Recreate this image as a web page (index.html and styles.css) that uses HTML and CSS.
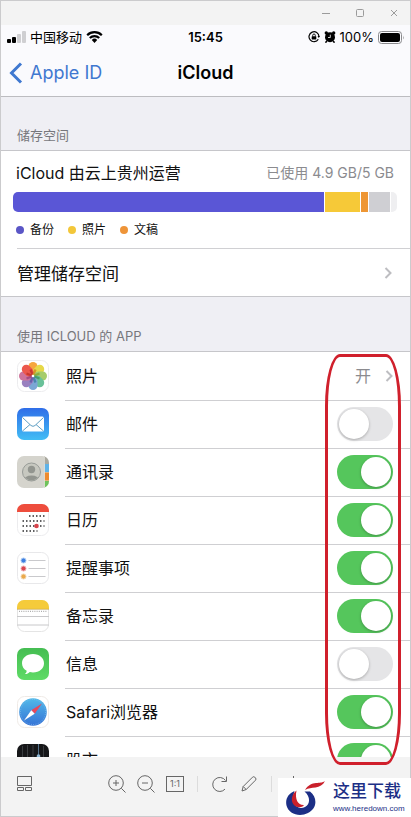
FILE: index.html
```html
<!DOCTYPE html>
<html lang="zh-CN">
<head>
<meta charset="utf-8">
<meta name="viewport" content="width=device-width, initial-scale=1">
<title>iCloud</title>
<link rel="stylesheet" href="styles.css">
</head>
<body>
<div class="window">
  <div class="titlebar">
    <button class="winbtn" aria-label="最小化"><svg width="10" height="10" viewBox="0 0 10 10"><path d="M1 5.5h8"/></svg></button>
    <button class="winbtn" aria-label="最大化"><svg width="10" height="10" viewBox="0 0 10 10"><rect x="1.5" y="1.5" width="7" height="7" rx="1"/></svg></button>
    <button class="winbtn" aria-label="关闭"><svg width="10" height="10" viewBox="0 0 10 10"><path d="M2 2l6 6M8 2l-6 6"/></svg></button>
  </div>

  <header class="phone-head">
    <div class="status">
      <div class="status-left">
        <svg width="19" height="12" viewBox="0 0 19 12"><rect x="0" y="8" width="4" height="4" rx="1"/><rect x="5" y="6" width="4" height="6" rx="1"/><rect x="10" y="3" width="4" height="9" rx="1" fill="#cfcfd2"/><rect x="15" y="0" width="4" height="12" rx="1" fill="#cfcfd2"/></svg>
        <span>中国移动</span>
        <svg width="17" height="12" viewBox="0 0 17 12"><path d="M1.2 4.2a10.4 10.4 0 0 1 14.6 0M3.8 7a6.7 6.7 0 0 1 9.4 0" fill="none" stroke="#000" stroke-width="2.2"/><path d="M5.8 8.9a3.9 3.9 0 0 1 5.4 0L8.5 12z"/></svg>
      </div>
      <time class="clock">15:45</time>
      <div class="status-right">
        <svg width="12" height="12" viewBox="0 0 12 12"><path d="M10.3 8.3A5 5 0 1 1 11 5.5" fill="none" stroke="#000" stroke-width="1.2"/><path d="M9.5 5h2.5l-1.2 2z"/><rect x="3.7" y="5.3" width="4.6" height="3.2" rx=".4"/><path d="M4.7 5.5V4.3a1.3 1.3 0 0 1 2.6 0v1.2" fill="none" stroke="#000" stroke-width=".9"/></svg>
        <svg width="12" height="12" viewBox="0 0 12 12"><circle cx="6" cy="6.3" r="5"/><circle cx="2.3" cy="2" r="1.7"/><circle cx="9.700" cy="2" r="1.7"/><path d="M2.800 10l-1.3 1.7M9.200 10l1.3 1.7" stroke="#000" stroke-width="1.5"/><path d="M6.300 3.700v2.800H4" fill="none" stroke="#fff" stroke-width=".8"/></svg>
        <span>100%</span>
        <svg width="26" height="13" viewBox="0 0 26 13"><rect x=".5" y=".5" width="23" height="12" rx="3" fill="none" stroke="#8a8a8d"/><rect x="2" y="2" width="20" height="9" rx="2"/><path d="M25 4.500q1 2 0 4z" fill="#777"/></svg>
      </div>
    </div>
    <nav class="nav">
      <a class="back" href="#"><svg width="14" height="22" viewBox="0 0 14 22"><path d="M12 1.500L2.500 11L12 20.500"/></svg><span>Apple ID</span></a>
      <h1>iCloud</h1>
    </nav>
  </header>

  <main class="content">
    <h2 class="section">储存空间</h2>
    <section class="card">
      <div class="storage">
        <div class="storage-head"><span>iCloud 由云上贵州运营</span><span class="used">已使用 4.9 GB/5 GB</span></div>
        <div class="bar"><i class="backup"></i><i class="photos"></i><i class="docs"></i><i class="other"></i><i class="free"></i></div>
        <ul class="legend"><li class="l-backup">备份</li><li class="l-photos">照片</li><li class="l-docs">文稿</li></ul>
      </div>
      <a class="manage" href="#"><span>管理储存空间</span><svg class="chev" width="8" height="12" viewBox="0 0 8 12"><path d="M1.500 1l5 5l-5 5"/></svg></a>
    </section>
    <h2 class="section apps-title">使用 ICLOUD 的 APP</h2>
    <div class="apps-area">
      <ul class="apps">
        <li><a class="row" href="#">
          <svg class="icon" viewBox="0 0 32 32"><rect x=".5" y=".5" width="31" height="31" rx="7" fill="#fff" stroke="#ececee"/><g opacity=".88"><rect x="11.500" y="2" width="9" height="13" rx="4.500" fill="#f59a22"/><rect x="11.500" y="2" width="9" height="13" rx="4.500" fill="#e3d32f" transform="rotate(45 16 16)"/><rect x="11.500" y="2" width="9" height="13" rx="4.500" fill="#9ac657" transform="rotate(90 16 16)"/><rect x="11.500" y="2" width="9" height="13" rx="4.500" fill="#55b98b" transform="rotate(135 16 16)"/><rect x="11.500" y="2" width="9" height="13" rx="4.500" fill="#699bd0" transform="rotate(180 16 16)"/><rect x="11.500" y="2" width="9" height="13" rx="4.500" fill="#8b70b8" transform="rotate(225 16 16)"/><rect x="11.500" y="2" width="9" height="13" rx="4.500" fill="#c8608d" transform="rotate(270 16 16)"/><rect x="11.500" y="2" width="9" height="13" rx="4.500" fill="#ea4134" transform="rotate(315 16 16)"/></g><g stroke-width="2.200" opacity=".6"><path d="M16 16l-2.500-6.500M16 16l-6.500-2.500" stroke="#b3261e"/><path d="M16 16l2.500-6.500" stroke="#c96b12"/><path d="M16 16l6.500-2.500" stroke="#7b9a20"/><path d="M16 16l6.500 2.500" stroke="#2f8a4d"/><path d="M16 16l2.500 6.500" stroke="#2c6f93"/><path d="M16 16l-2.500 6.500" stroke="#4c4a9b"/><path d="M16 16l-6.500 2.500" stroke="#8b3377"/></g><circle cx="16" cy="16" r="1.300" fill="#fff"/></svg>
          <span class="name">照片</span><span class="state">开</span><svg class="chev" width="8" height="12" viewBox="0 0 8 12"><path d="M1.500 1l5 5l-5 5"/></svg></a></li>
        <li><label class="row">
          <svg class="icon" viewBox="0 0 32 32"><defs><linearGradient id="mail" x2="0" y2="1"><stop stop-color="#2f6de8"/><stop offset="1" stop-color="#42bdf5"/></linearGradient></defs><rect width="32" height="32" rx="7" fill="url(#mail)"/><rect x="5" y="8.500" width="22" height="15" rx="1.500" fill="#fff"/><path d="M5.500 9.500l8.500 8q2 1.700 4 0l8.500-8M5.500 23l7.500-6.500M26.500 23l-7.500-6.500" fill="none" stroke="#5f9fc4"/></svg>
          <span class="name">邮件</span><input class="switch" type="checkbox" role="switch"></label></li>
        <li><label class="row">
          <svg class="icon" viewBox="0 0 32 32"><defs><clipPath id="cc"><rect width="32" height="32" rx="7"/></clipPath><clipPath id="cp"><circle cx="14.500" cy="16" r="8.500"/></clipPath></defs><g clip-path="url(#cc)"><path fill="#d5d4cd" d="M0 0h32v32H0z"/><path fill="#aaa99f" d="M27 0h5v8h-5z"/><path fill="#60b3e7" d="M27.500 8H32v8h-4.500z"/><path fill="#ee8b2e" d="M27.500 16.500H32v8h-4.500z"/><path fill="#6fc35c" d="M27.500 25H32v7h-4.500z"/><path d="M27.500 0v32" stroke="#e9e8e2" stroke-width=".7"/></g><circle cx="14.500" cy="16" r="9" fill="#c7c8c0" stroke="#989c98"/><g clip-path="url(#cp)" fill="#92958f"><circle cx="14.500" cy="13.500" r="3.700"/><ellipse cx="14.500" cy="24.500" rx="8" ry="5"/></g></svg>
          <span class="name">通讯录</span><input class="switch" type="checkbox" role="switch" checked></label></li>
        <li><label class="row">
          <svg class="icon" viewBox="0 0 32 32"><rect x=".5" y=".5" width="31" height="31" rx="7" fill="#fff" stroke="#ececee"/><path d="M0 8V7a7 7 0 0 1 7-7h18a7 7 0 0 1 7 7v1z" fill="#ee4d3d"/><path d="M12 12h15.500M5.500 17h22M5.500 22h22M5.500 27h15" stroke="#2d2d2f" stroke-width="1.500" stroke-dasharray="1.500 2"/><circle cx="19.500" cy="22" r="2.300" fill="#d8434c"/></svg>
          <span class="name">日历</span><input class="switch" type="checkbox" role="switch" checked></label></li>
        <li><label class="row">
          <svg class="icon" viewBox="0 0 32 32"><rect x=".5" y=".5" width="31" height="31" rx="7" fill="#fff" stroke="#e8e8ea"/><path d="M11.500 8.500h17M11.500 16.500h17M11.500 24.500h17" stroke="#c9c9cc"/><circle cx="6.500" cy="8.500" r="2.500" fill="#3e7fe0" stroke="#a9c9f3"/><circle cx="6.500" cy="16.500" r="2.500" fill="#d94750" stroke="#f1adb0"/><circle cx="6.500" cy="24.500" r="2.500" fill="#eba94b" stroke="#f3d6ab"/></svg>
          <span class="name">提醒事项</span><input class="switch" type="checkbox" role="switch" checked></label></li>
        <li><label class="row">
          <svg class="icon" viewBox="0 0 32 32"><rect x=".5" y=".5" width="31" height="31" rx="7" fill="#fff" stroke="#e4e4e4"/><path d="M0 9V7a7 7 0 0 1 7-7h18a7 7 0 0 1 7 7v2z" fill="#f5cb3b"/><path d="M0 9.300h32" stroke="#c5a64a" stroke-width=".7"/><path d="M2 11.300h28" stroke="#999" stroke-dasharray="1 1.200"/><path d="M0 16.500h32M0 25h32" stroke="#c8c8ca"/></svg>
          <span class="name">备忘录</span><input class="switch" type="checkbox" role="switch" checked></label></li>
        <li><label class="row">
          <svg class="icon" viewBox="0 0 32 32"><defs><linearGradient id="msg" x2="0" y2="1"><stop stop-color="#45bd52"/><stop offset="1" stop-color="#5fdb66"/></linearGradient></defs><rect width="32" height="32" rx="7" fill="url(#msg)"/><path d="M16 6C9.500 6 5 10 5 15.200c0 3.300 1.800 6 4.700 7.600-.1 1.500-.8 2.400-1.700 3.300 2.100-.1 3.600-.8 4.800-2.100 1 .2 2.100.4 3.200.4 6.500 0 11-4 11-9.200S22.500 6 16 6z" fill="#fff"/></svg>
          <span class="name">信息</span><input class="switch" type="checkbox" role="switch"></label></li>
        <li><label class="row">
          <svg class="icon" viewBox="0 0 32 32"><defs><linearGradient id="saf" x2="0" y2="1"><stop stop-color="#51b9e9"/><stop offset="1" stop-color="#3673d6"/></linearGradient></defs><rect x=".5" y=".5" width="31" height="31" rx="7" fill="#fff" stroke="#efeae6"/><circle cx="16" cy="16" r="13.800" fill="url(#saf)"/><circle cx="16" cy="16" r="12.500" fill="none" stroke="#8cc4ee" stroke-width=".8" stroke-dasharray=".8 1.500"/><path d="M25 7.500L14.300 14.200l3.400 3.600z" fill="#e9485a"/><path d="M7 24.500l7.300-10.300 3.400 3.600z" fill="#fff"/></svg>
          <span class="name">Safari浏览器</span><input class="switch" type="checkbox" role="switch" checked></label></li>
        <li><label class="row">
          <svg class="icon" viewBox="0 0 32 32"><rect width="32" height="32" rx="7" fill="#161719"/><path d="M5.500 2v28M10.500 1v30M16 1v30M26.500 2v28" stroke="#3a3d40"/><path d="M21.500 0v32" stroke="#54718a"/><circle cx="21.500" cy="12" r="1.800" fill="#8db6d2"/></svg>
          <span class="name">股市</span><input class="switch" type="checkbox" role="switch" checked></label></li>
      </ul>
      <div class="marker"></div>
    </div>
  </main>

  <footer class="toolbar">
    <button class="tool thumbs" aria-label="缩略图"><svg width="16" height="16" viewBox="0 0 16 16"><path d="M.5.5h14v9H.5zM.5 11.500h6v3h-6zM8.500 11.500h6v3h-6z"/></svg></button>
    <button class="tool" aria-label="放大"><svg width="18" height="18" viewBox="0 0 18 18"><circle cx="8" cy="8" r="7.300"/><path d="M13.300 13.300l4.200 4.200M5 8h6M8 5v6"/></svg></button>
    <button class="tool" aria-label="缩小"><svg width="18" height="18" viewBox="0 0 18 18"><circle cx="8" cy="8" r="7.300"/><path d="M13.300 13.300l4.200 4.200M5 8h6"/></svg></button>
    <button class="tool actual">1:1</button>
    <span class="sep"></span>
    <button class="tool" aria-label="旋转"><svg width="18" height="18" viewBox="0 0 18 18"><path d="M14 14.100A7 7 0 1 1 14.500 5.500M15.500 1.500v5h-5"/></svg></button>
    <button class="tool" aria-label="编辑"><svg width="18" height="18" viewBox="0 0 18 18"><path d="M2 16l1.200-4.500L12.500 2.200q1.200-1 2.300 0l.7.700q1 1.200 0 2.300L6.200 14.500zM3.200 11.500l3 3"/></svg></button>
    <span class="sep"></span>
    <button class="tool" aria-label="保存"><svg width="18" height="18" viewBox="0 0 18 18"><path d="M8.500 1v11M4 8l4.500 4.500L13 8M1 16.500h15"/></svg></button>
    <div class="watermark">
      <svg width="40" height="37" viewBox="0 0 40 37"><path d="M9.500 12C3.500 14.500 0 20 1.500 26.500c2 8.500 13 12 21.500 7.500 9.500-5 9.500-15.500 2-21.500H19.500c6 5 6 12.500.5 15.500C13 31.500 5.500 25.500 9.500 12z" fill="#1c2f86"/><path d="M11.500 11.500C6 16 5.500 23 9.500 26.500c3 2.700 8 2 9.500-.5-5.500.5-9.500-5-7.500-14.500z" fill="#c9202b"/><path d="M20 11c3-5 7-6.500 11-7 4-.4 6 0 9-2-2 4-5.500 6-9.500 6.500-4 .4-7 .5-10.500 2.500z" fill="#c9202b"/></svg>
      <div class="wm-text"><strong>这里下载</strong><span>www.heredown.com</span></div>
    </div>
  </footer>
</div>
</body>
</html>
```
FILE: styles.css
```css
* { box-sizing: border-box; }
body {
  margin: 0;
  font-family: Inter, "Noto Sans CJK SC", sans-serif;
  font-size: 16px;
  color: #111;
}
h1, h2, ul { margin: 0; padding: 0; font-weight: 400; list-style: none; }
a { color: inherit; text-decoration: none; }
button { border: 0; padding: 0; background: none; font: inherit; }
svg { display: block; flex: none; }

.window {
  display: flex;
  flex-direction: column;
  height: 100vh;
  border: 1px solid #cbcbcd;
  background: #fff;
}
.titlebar {
  display: flex;
  justify-content: flex-end;
  align-items: center;
  gap: 24px;
  height: 24px;
  padding-right: 11px;
  background: #f3f3f3;
  flex: none;
}
.winbtn svg { fill: none; stroke: #9b9b9b; }

.phone-head { background: #fafafd; border-bottom: 1px solid #bcbcc0; flex: none; }
.status {
  display: grid;
  grid-template-columns: 1fr auto 1fr;
  align-items: center;
  height: 24px;
  padding: 0 6px;
  font-size: 13px;
  line-height: 20px;
  color: #000;
}
.status-left, .status-right { display: flex; align-items: center; gap: 4px; }
.status-right { justify-content: flex-end; }
.clock { font-weight: 600; }
.nav {
  display: grid;
  grid-template-columns: 1fr auto 1fr;
  align-items: center;
  height: 47px;
  padding: 0 8px;
}
.back { display: flex; align-items: center; gap: 7px; font-size: 18px; color: #3f78d0; }
.back path { fill: none; stroke: #3f78d0; stroke-width: 3; }
.nav h1 { font-size: 18px; font-weight: 600; color: #000; }

.content { display: flex; flex-direction: column; flex: 1; min-height: 0; }
.section {
  display: flex;
  align-items: flex-end;
  height: 54px;
  padding: 0 16px 5px;
  background: #efeff4;
  border-bottom: 1px solid #c6c6ca;
  font-size: 13px;
  line-height: 20px;
  color: #77777c;
  flex: none;
}
.card { border-bottom: 1px solid #c6c6ca; flex: none; }
.storage { padding: 9px 13px 0 12px; }
.storage-head {
  display: flex;
  justify-content: space-between;
  align-items: center;
  height: 24px;
  padding: 0 3px;
  white-space: nowrap;
}
.used { font-size: 14px; color: #8b8b8f; }
.bar {
  display: flex;
  gap: 1px;
  height: 20px;
  margin-top: 8px;
  border-radius: 5px;
  overflow: hidden;
}
.backup { flex: 312; background: #5a56d6; }
.photos { flex: 35; background: #f6c938; }
.docs { flex: 7; background: #ee9634; }
.other { flex: 21; background: #cfcfd3; }
.free { flex: 6; background: #efeff1; }
.legend {
  display: flex;
  gap: 14px;
  height: 36px;
  margin-left: 3px;
  align-items: center;
  font-size: 12px;
  line-height: 18px;
}
.legend li { display: flex; align-items: center; gap: 6px; }
.legend li::before { content: ""; width: 8px; height: 8px; border-radius: 50%; background: #5a56c6; }
.legend .l-photos::before { background: #f3c73a; }
.legend .l-docs::before { background: #ee9438; }
.manage {
  display: flex;
  justify-content: space-between;
  align-items: center;
  height: 48px;
  margin-left: 16px;
  padding-right: 18px;
  border-top: 1px solid #d0d0d3;
  font-size: 17px;
}
.chev path { fill: none; stroke: #bdbdc1; stroke-width: 2; }

.apps-title { height: 55px; }
.apps-area { position: relative; z-index: 1; flex: 1; min-height: 0; }
.apps { height: 100%; overflow: hidden; }
.row {
  display: flex;
  align-items: center;
  height: 48px;
  padding: 0 17px 0 16px;
}
.apps li { position: relative; }
.apps li + li::before {
  content: "";
  position: absolute;
  top: 0;
  right: 0;
  left: 64px;
  height: 1px;
  background: #cfcfd2;
}
.icon { width: 32px; height: 32px; }
.name { flex: 1; margin-left: 17px; }
.name, .state { font-size: 16px; line-height: 24px; }
.state { margin-right: 14px; color: #8b8b8f; }
.switch {
  appearance: none;
  flex: none;
  width: 56px;
  height: 34px;
  margin: 0;
  padding: 2px;
  border-radius: 17px;
  background: #e5e5e7;
}
.switch::before {
  content: "";
  display: block;
  width: 30px;
  height: 30px;
  border-radius: 50%;
  background: #fff;
  box-shadow: 0 1px 3px #0004;
}
.switch:checked { background: #55c65c; }
.switch:checked::before { margin-left: auto; }
.marker {
  position: absolute;
  top: 2px;
  right: 9px;
  bottom: -8px;
  width: 76px;
  border: 3px solid #d0202c;
  border-radius: 15px / 52px;
  pointer-events: none;
}

.toolbar {
  position: relative;
  display: flex;
  align-items: center;
  gap: 11px;
  height: 59px;
  padding: 0 16px 5px;
  background: #f3f3f3;
  flex: none;
}
.tool { color: #666; }
.tool svg { fill: none; stroke: #666; }
.thumbs { margin-right: 64px; }
.actual {
  width: 18px;
  height: 16px;
  border: 1px solid #666;
  font-size: 9px;
  line-height: 14px;
}
.sep { width: 1px; height: 16px; margin: 0 2px; background: #dcdcdc; }
.watermark {
  position: absolute;
  right: -1px;
  bottom: -1px;
  display: flex;
  align-items: center;
  gap: 8px;
  width: 133px;
  height: 39px;
  padding-left: 7px;
  background: #fff;
  color: #1c2f86;
}
.wm-text { display: flex; flex-direction: column; white-space: nowrap; }
.wm-text strong { font-size: 17px; line-height: 22px; font-weight: 500; }
.wm-text span { font-family: "Liberation Sans", sans-serif; font-size: 8px; line-height: 14px; }
```
